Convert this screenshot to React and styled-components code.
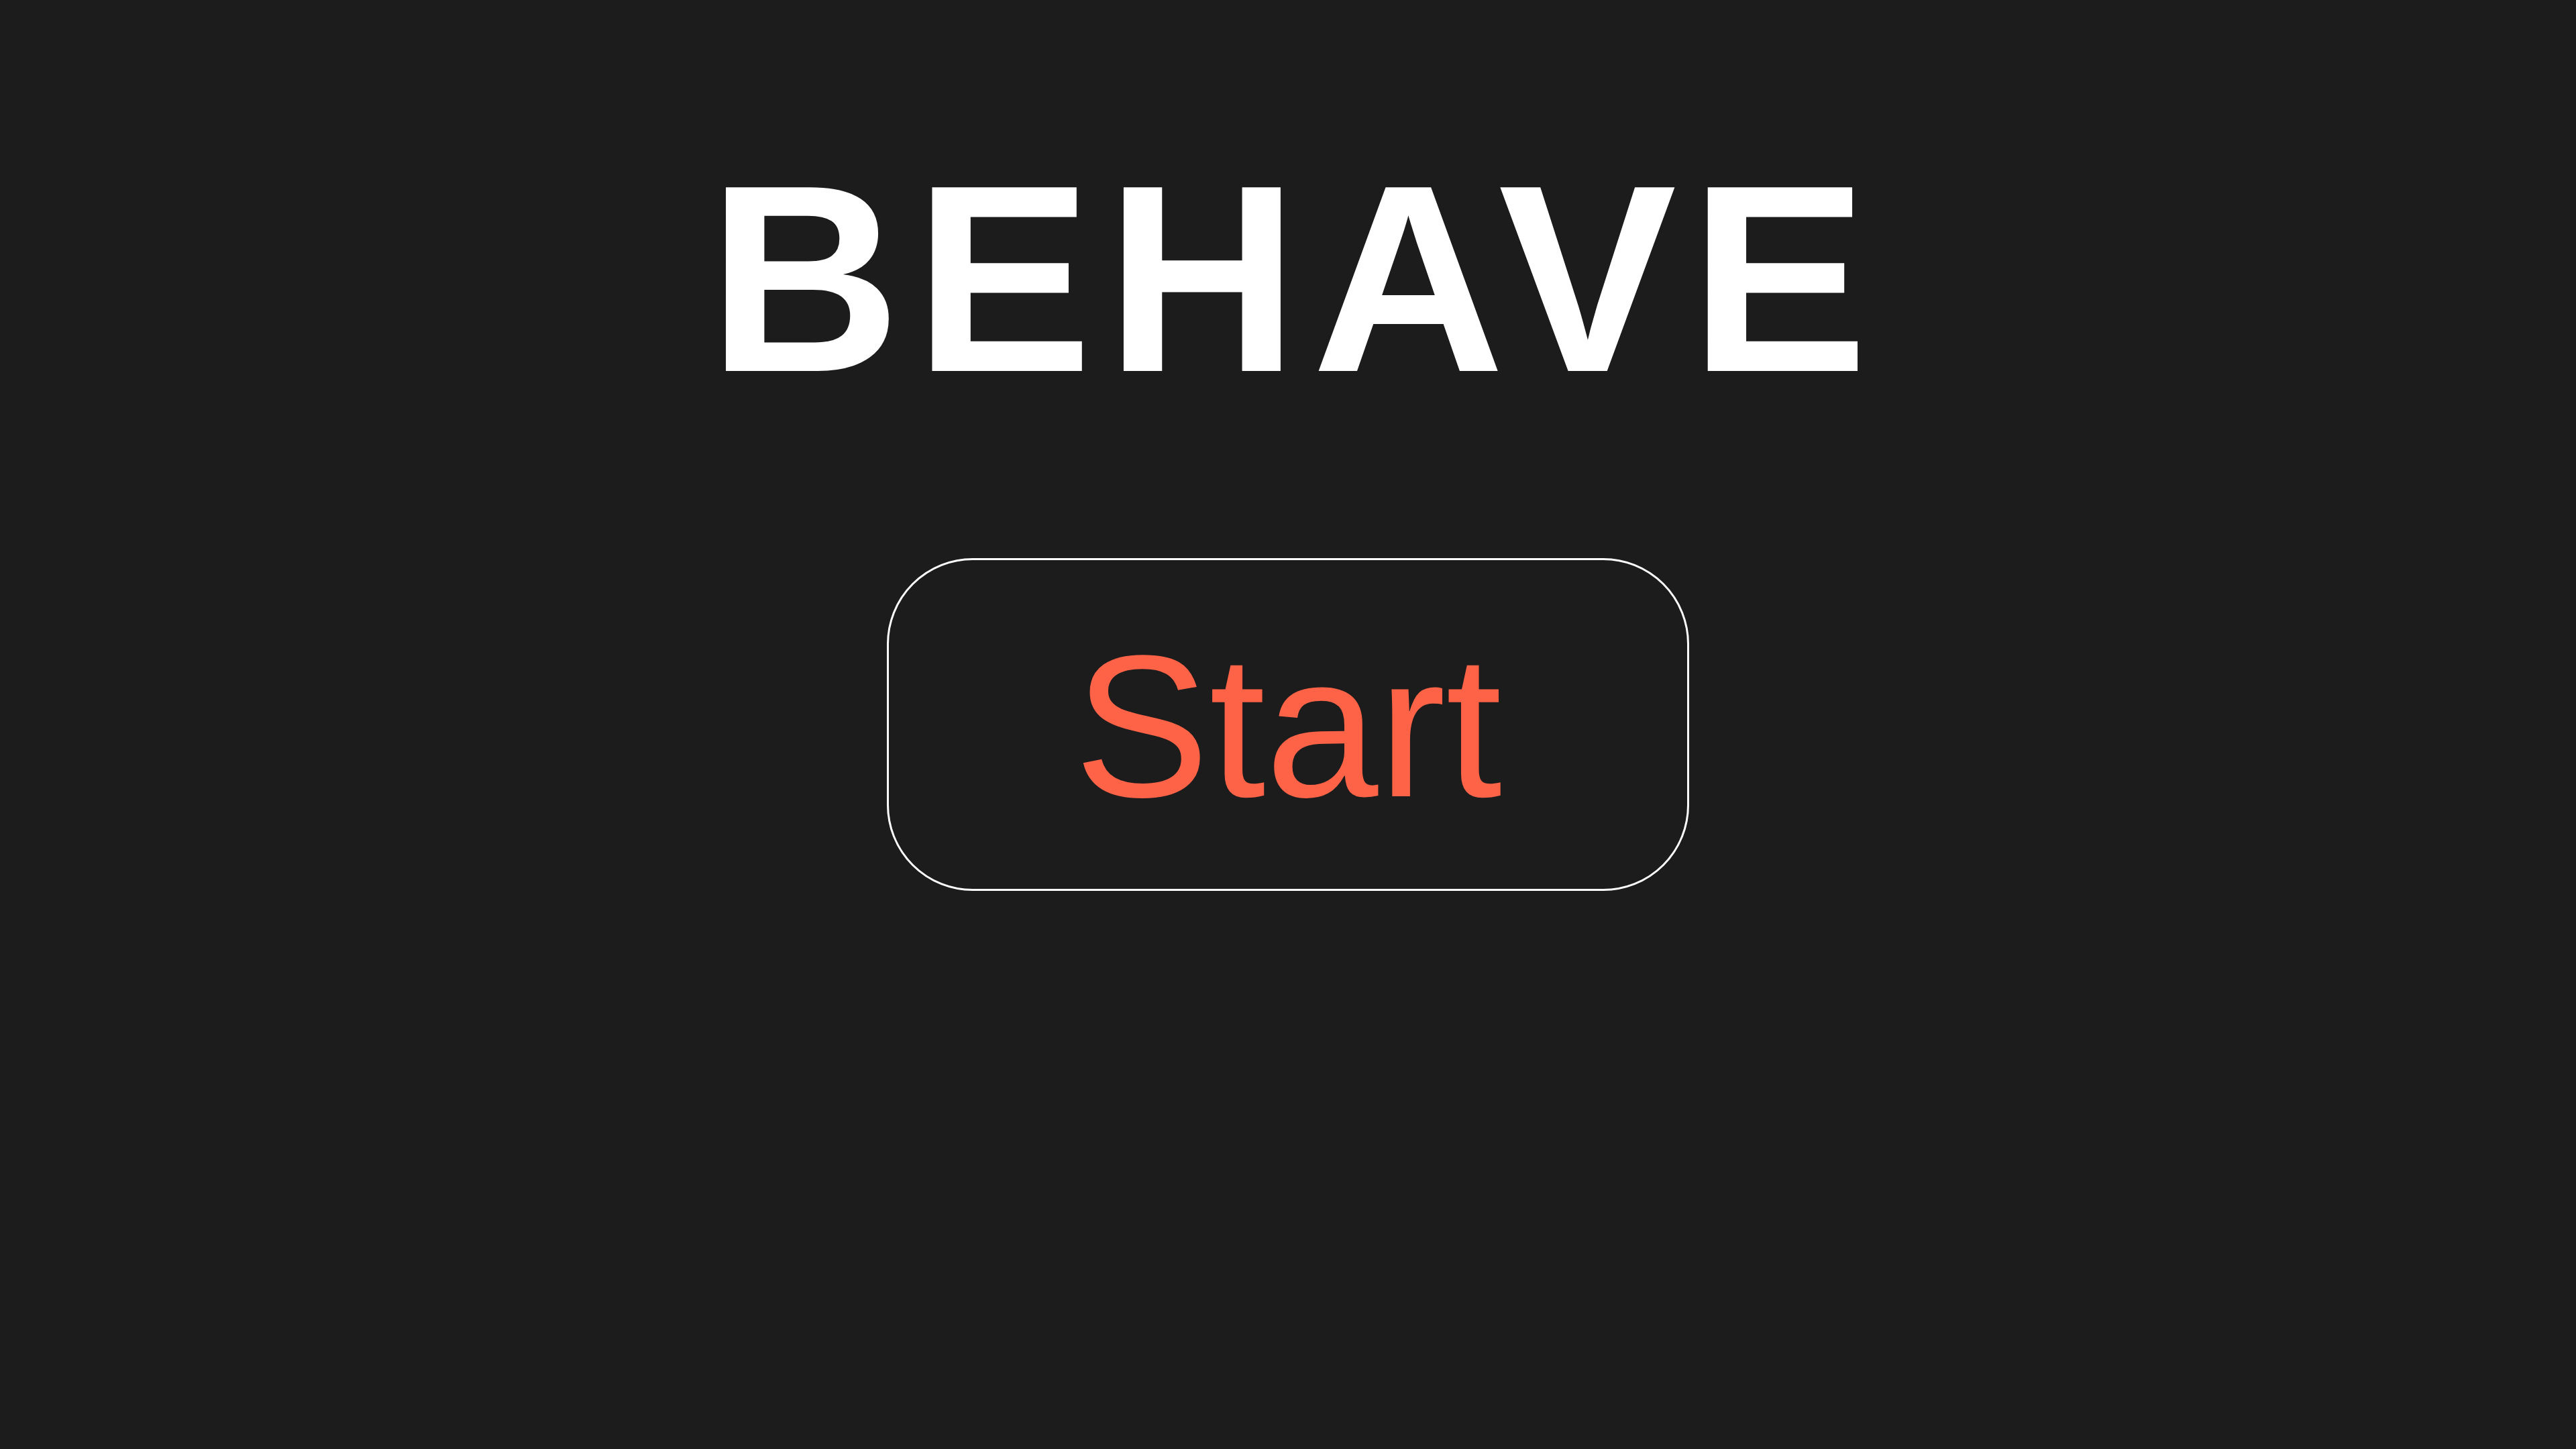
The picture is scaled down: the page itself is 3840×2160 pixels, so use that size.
import styled, { createGlobalStyle } from "styled-components";

const GlobalStyle = createGlobalStyle`
  html, body {
    margin: 0;
    padding: 0;
    background: #1c1c1c;
  }
  body {
    font-family: "Liberation Sans", Arial, sans-serif;
  }
`;

const Page = styled.main`
  min-height: 100vh;
  display: flex;
  flex-direction: column;
  align-items: center;
  padding-top: 216px;
  box-sizing: border-box;
  background: #1c1c1c;
`;

const Title = styled.h1`
  margin: 0 -20px 218px 0;
  font-family: "Liberation Sans", Arial, sans-serif;
  font-weight: 700;
  font-size: 398px;
  line-height: 1;
  letter-spacing: 20px;
  color: #ffffff;
`;

const StartButton = styled.button`
  width: 1196px;
  height: 496px;
  box-sizing: border-box;
  border: 3px solid #ffffff;
  border-radius: 128px;
  background: transparent;
  color: #ff6347;
  font-family: "Liberation Sans", Arial, sans-serif;
  font-size: 302px;
  line-height: 1;
  cursor: pointer;
  display: flex;
  align-items: center;
  justify-content: center;
  padding: 6px 0 0;
`;

export default function App() {
  return (
    <>
      <GlobalStyle />
      <Page>
        <Title>BEHAVE</Title>
        <StartButton>Start</StartButton>
      </Page>
    </>
  );
}
